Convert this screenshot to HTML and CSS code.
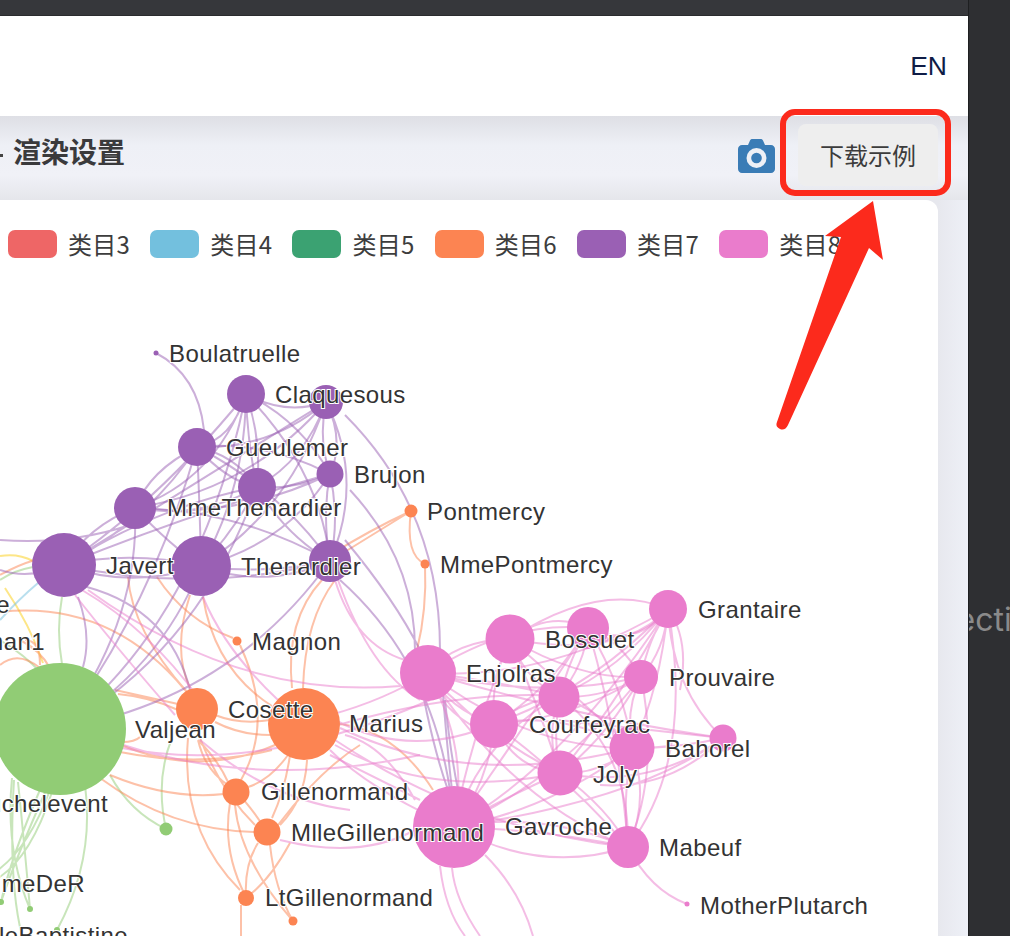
FILE: index.html
```html
<!DOCTYPE html>
<html lang="zh-CN">
<head>
<meta charset="utf-8">
<title>渲染设置</title>
<link rel="stylesheet" href="styles.css">
</head>
<body>
<div class="window">
  <div class="tabstrip"></div>
  <header class="topnav"><span class="lang">EN</span></header>
  <div class="toolbar">
    <span class="toolbar-mark"></span>
    <h2 class="toolbar-title">渲染设置</h2>
    <svg class="camera" viewBox="0 0 37 34" aria-hidden="true">
      <path class="camera-body" d="M4 6h6l2-4.500C12.600 .4 13.500 0 14.500 0h8c1 0 1.900 .4 2.500 1.500L27 6h6c2.200 0 4 1.800 4 4v20c0 2.200-1.800 4-4 4H4c-2.200 0-4-1.800-4-4V10c0-2.200 1.800-4 4-4z"/>
      <circle class="camera-ring" cx="18.500" cy="19" r="10"/>
      <circle class="camera-body" cx="18.500" cy="19" r="5.300"/>
    </svg>
    <button class="download" type="button">下载示例</button>
  </div>
  <main class="card">
    <ul class="legend">
      <li class="legend-item"><i class="swatch c-red"></i>类目3</li>
      <li class="legend-item"><i class="swatch c-blue"></i>类目4</li>
      <li class="legend-item"><i class="swatch c-teal"></i>类目5</li>
      <li class="legend-item"><i class="swatch c-orange"></i>类目6</li>
      <li class="legend-item"><i class="swatch c-purple"></i>类目7</li>
      <li class="legend-item"><i class="swatch c-pink"></i>类目8</li>
    </ul>
    <svg class="graph" viewBox="0 258 938 678" aria-label="graph">
      <g class="edges e-yellow">
        <path d="M0 556Q18 553 33 561M5 588Q30 625 43 663"/>
      </g>
      <g class="edges e-blue">
        <path d="M38 583Q18 600 0 620"/>
      </g>
      <g class="edges e-green">
        <path d="M62 597Q56 630 62 664M0 640Q25 655 40 672M33 567Q15 570 0 580"/>
        <path d="M110 775Q130 812 166 829M172 738Q155 780 166 829"/>
        <path d="M42 785Q10 860 1 902M47 788Q15 860 1 902M12 778Q5 850 30 909M18 782Q25 850 30 909M85 785Q95 860 57 930M52 792Q30 860 -5 880M50 790Q28 850 -5 872M14 780Q8 880 22 936"/>
      </g>
      <g class="edges e-orange">
        <path d="M0 612Q110 600 185 690M128 577Q132 630 187 692M157 577Q185 620 233 638M240 645Q275 720 241 780"/>
        <path d="M190 595Q172 650 190 688M203 597Q215 670 272 706M115 690L178 704M118 694Q150 697 178 710"/>
        <path d="M121 745Q200 778 275 745M120 752Q200 768 272 750M110 775Q170 800 224 794M100 778Q170 830 254 832M122 742Q135 742 140 737"/>
        <path d="M215 715Q240 725 270 720M215 722Q240 735 270 735M198 740Q205 770 228 785M198 740Q218 760 228 782M200 738Q220 790 255 825M188 738Q180 830 240 890"/>
        <path d="M288 755Q270 780 248 787M307 760Q305 800 280 825M290 755Q285 790 272 818M278 825Q320 770 360 745"/>
        <path d="M292 688Q285 620 322 580M303 688Q305 620 335 580M330 561L411 511M330 555Q370 530 411 511M411 511Q405 555 425 564M425 564Q427 610 417 650"/>
        <path d="M236 792Q250 805 267 832M230 803Q222 850 245 895M235 805Q240 860 293 921M258 843Q244 865 246 898M290 843Q270 880 247 897M270 845Q275 890 293 921M241 905L241 936"/>
        <path d="M340 724Q395 730 433 790M0 665Q18 650 40 668M20 640Q40 650 50 668M25 640Q40 640 40 665M0 575Q18 565 35 560"/>
      </g>
      <g class="edges e-purple">
        <path d="M156 353Q198 375 204 430M246 394Q285 416 326 402M246 394Q232 440 197 447M246 394Q247 440 257 487M246 394Q262 440 257 487M246 394Q300 420 330 474M246 394Q215 480 135 508M246 394Q245 490 201 566M246 394Q320 470 330 561"/>
        <path d="M326 402Q270 450 197 447M326 402Q305 460 257 487M326 402Q345 440 330 474M326 402Q250 490 135 508M326 402Q290 510 201 566M326 402Q365 480 330 561M326 402Q318 440 330 474"/>
        <path d="M197 447Q225 480 257 487M197 447Q235 455 257 487M197 447Q265 440 330 474M197 447Q150 470 135 508M197 447Q200 510 201 566M197 447Q280 490 330 561"/>
        <path d="M257 487Q295 490 330 474M257 487Q200 520 135 508M257 487Q235 530 201 566M257 487Q285 535 330 561M330 474Q235 520 135 508M330 474Q285 545 201 566M330 474Q340 520 330 561M330 474Q322 515 330 561"/>
        <path d="M135 508Q170 545 201 566M135 508Q240 510 330 561M201 566Q265 590 330 561M201 566Q265 575 330 561"/>
        <path d="M64 565Q150 520 197 447M64 565Q90 525 135 508M64 565Q160 505 257 487M64 565Q200 510 330 474M64 565Q130 590 201 566M64 565Q130 550 201 566M64 565Q200 595 330 561M64 565Q160 500 246 394M64 565Q200 480 326 402M0 570Q30 580 64 565M0 540Q70 545 130 525"/>
        <path d="M78 597Q92 635 83 667M87 587Q170 610 190 690M60 729Q160 670 201 566M60 729Q140 620 135 508M60 729Q150 610 197 447M60 729Q200 620 246 394M60 729Q200 650 257 487M60 729Q230 700 330 561"/>
        <path d="M340 580Q430 660 450 790M345 415Q440 510 440 650Q445 730 452 790M350 490Q415 560 415 650Q430 740 448 790M345 540Q395 600 420 650M445 700Q450 750 458 790"/>
      </g>
      <g class="edges e-pink">
        <path d="M75 595Q110 640 175 715M88 590Q240 700 400 686M82 590Q150 630 200 700M203 597Q225 650 278 700M335 580Q355 645 405 660M338 580Q370 670 420 700"/>
        <path d="M122 748Q260 775 430 700M120 744Q260 790 420 755M200 740Q270 800 350 810M280 840Q360 860 415 830M330 755Q380 780 420 800M345 735Q385 745 415 800"/>
        <path d="M330 715Q385 700 428 673M335 720Q410 760 494 724M338 725Q460 690 559 696M330 750Q370 790 454 827M335 745Q430 800 560 773M335 740Q470 830 628 847M340 728Q470 790 632 748"/>
        <path d="M428 673Q455 640 510 639M428 673Q510 620 588 628M428 673Q550 680 668 609M428 673Q540 700 641 677M428 673Q490 680 559 696M428 673Q450 710 494 724M428 673Q530 750 632 748M428 673Q490 740 560 773M428 673Q470 750 454 827M428 673Q510 800 628 847M428 673Q590 720 723 738M428 673Q440 710 480 730"/>
        <path d="M510 639Q550 610 588 628M510 639Q600 580 668 609M510 639Q580 680 641 677M510 639Q525 680 559 696M510 639Q490 680 494 724M510 639Q580 700 632 748M510 639Q540 710 560 773M510 639Q470 740 454 827M510 639Q620 660 668 609"/>
        <path d="M588 628Q635 650 668 609M588 628Q620 640 641 677M588 628Q585 665 559 696M588 628Q550 690 494 724M588 628Q625 690 632 748M588 628Q545 700 560 773M588 628Q530 720 454 827M588 628Q620 740 628 847"/>
        <path d="M668 609Q665 650 641 677M668 609Q648 640 641 677M668 609Q620 670 559 696M668 609Q590 690 494 724M668 609Q660 690 632 748M668 609Q672 690 723 738M668 609Q620 700 560 773M668 609Q570 760 454 827M668 609Q695 760 628 847M668 609Q690 640 680 690"/>
        <path d="M641 677Q600 700 559 696M641 677Q570 720 494 724M641 677Q625 710 632 748M641 677Q605 740 560 773M641 677Q560 780 454 827M641 677Q660 770 628 847M559 696Q525 700 494 724M559 696Q600 710 632 748M559 696Q545 740 560 773M559 696Q480 740 454 827M559 696Q630 750 628 847"/>
        <path d="M494 724Q560 710 632 748M494 724Q515 770 560 773M494 724Q490 780 454 827M494 724Q570 780 628 847M632 748Q600 775 560 773M632 748Q550 810 454 827M632 748Q650 800 628 847M632 748Q622 800 628 847M723 738Q650 730 559 720M723 738Q640 800 454 827M723 738Q650 790 560 773M723 738Q670 790 600 785M723 738Q680 748 632 748M560 773Q610 810 628 847M560 773Q500 800 454 827"/>
        <path d="M454 827Q540 875 628 847M454 827Q550 830 628 847M454 827Q540 810 628 847M628 847Q650 890 687 904M440 866Q445 910 465 936M452 868Q455 900 480 936M485 855Q520 890 533 936"/>
      </g>
      <g class="nodes n-purple">
        <circle cx="156" cy="353" r="2.500"/><circle cx="246" cy="394" r="19"/><circle cx="326" cy="402" r="17"/><circle cx="197" cy="447" r="19"/><circle cx="257" cy="487" r="19"/><circle cx="330" cy="474" r="13.500"/><circle cx="135" cy="508" r="21"/><circle cx="64" cy="565" r="32"/><circle cx="201" cy="566" r="30"/><circle cx="330" cy="561" r="21"/>
      </g>
      <g class="nodes n-orange">
        <circle cx="411" cy="511" r="6.500"/><circle cx="425" cy="564" r="4.500"/><circle cx="237" cy="641" r="4.500"/><circle cx="197" cy="709" r="21"/><circle cx="304" cy="724" r="36"/><circle cx="236" cy="792" r="13.500"/><circle cx="267" cy="832" r="13.500"/><circle cx="246" cy="898" r="8"/><circle cx="293" cy="921" r="4.500"/>
      </g>
      <g class="nodes n-green">
        <circle cx="60" cy="729" r="66"/><circle cx="166" cy="829" r="6.500"/><circle cx="1" cy="902" r="3"/><circle cx="30" cy="909" r="3"/><circle cx="57" cy="930" r="3"/>
      </g>
      <g class="nodes n-pink">
        <circle cx="428" cy="673" r="28"/><circle cx="510" cy="639" r="24.500"/><circle cx="588" cy="628" r="21"/><circle cx="668" cy="609" r="19"/><circle cx="641" cy="677" r="17"/><circle cx="559" cy="697" r="20.500"/><circle cx="494" cy="724" r="24"/><circle cx="632" cy="748" r="22.500"/><circle cx="723" cy="738" r="13.500"/><circle cx="560" cy="773" r="22.500"/><circle cx="454" cy="827" r="41"/><circle cx="628" cy="847" r="21"/><circle cx="687" cy="904" r="2.500"/>
      </g>
      <g class="labels">
        <text x="169" y="362">Boulatruelle</text>
        <text x="275" y="403">Claquesous</text>
        <text x="226" y="456">Gueulemer</text>
        <text x="354" y="483">Brujon</text>
        <text x="167" y="516">MmeThenardier</text>
        <text x="427" y="520">Pontmercy</text>
        <text x="440" y="573">MmePontmercy</text>
        <text x="106" y="574">Javert</text>
        <text x="241" y="575">Thenardier</text>
        <text x="252" y="650">Magnon</text>
        <text x="135" y="738">Valjean</text>
        <text x="228" y="718">Cosette</text>
        <text x="349" y="732">Marius</text>
        <text x="261" y="800">Gillenormand</text>
        <text x="291" y="841">MlleGillenormand</text>
        <text x="265" y="906">LtGillenormand</text>
        <text x="466" y="682">Enjolras</text>
        <text x="545" y="648">Bossuet</text>
        <text x="698" y="618">Grantaire</text>
        <text x="669" y="686">Prouvaire</text>
        <text x="529" y="733">Courfeyrac</text>
        <text x="665" y="757">Bahorel</text>
        <text x="593" y="783">Joly</text>
        <text x="505" y="835">Gavroche</text>
        <text x="659" y="856">Mabeuf</text>
        <text x="700" y="914">MotherPlutarch</text>
        <text class="end" x="108" y="812">Fauchelevent</text>
        <text class="end" x="85" y="892">MmeDeR</text>
        <text class="end" x="128" y="944">MlleBaptistine</text>
        <text class="end" x="45" y="650">Woman1</text>
        <text class="end" x="10" y="613">Fantine</text>
      </g>
    </svg>
  </main>
</div>
<aside class="side"><span class="side-text">Section</span></aside>
<svg class="annotation" viewBox="0 0 1010 936" aria-hidden="true">
  <rect class="callout" x="783" y="112" width="165" height="81" rx="12"/>
  <path class="arrow" d="M873 201L883 260L869 248L788 425Q785 431 780 429Q775 427 777 422L841 237L825 236Z"/>
</svg>
</body>
</html>
```
FILE: styles.css
```css
* {
  box-sizing: border-box;
}

html,
body {
  margin: 0;
  height: 936px;
  overflow: hidden;
}

body {
  position: relative;
  display: flex;
  background: #2e2f32;
  font-family: "Noto Sans CJK SC", "Liberation Sans", sans-serif;
}

.window {
  width: 968px;
  height: 936px;
  display: flex;
  flex-direction: column;
  background: linear-gradient(90deg, #e7e8ee 938px, #eef0f7 968px);
  flex: none;
}

.tabstrip {
  height: 16px;
  background: #36373b;
  border-bottom: 1px solid #2a2b2e;
  flex: none;
}

.topnav {
  height: 100px;
  flex: none;
  display: flex;
  align-items: center;
  justify-content: flex-end;
  padding: 0 21px 0 0;
  background: #fff;
}

.lang {
  font-family: "Liberation Sans", sans-serif;
  font-size: 26.5px;
  color: #0f1c46;
}

.toolbar {
  height: 84px;
  flex: none;
  display: flex;
  align-items: center;
  padding: 0 30px 0 0;
  background: linear-gradient(180deg, #dedfe5 0%, #eef0f6 35%, #f0f1f7 70%, #e5e6eb 100%);
}

.toolbar-mark {
  width: 3px;
  height: 3px;
  margin-top: -6px;
  margin-right: 10px;
  background: #444;
  flex: none;
}

.toolbar-title {
  margin: -14px 0 0;
  font-size: 28px;
  line-height: 1;
  font-weight: 700;
  color: #3a3a3c;
}

.camera {
  width: 37px;
  height: 34px;
  margin: -4px 23px 0 auto;
  flex: none;
}

.camera-body {
  fill: #3a7cb6;
}

.camera-ring {
  fill: #eef0f6;
}

.download {
  width: 140px;
  height: 62px;
  margin-top: -7px;
  border: 0;
  border-radius: 8px;
  padding: 0;
  background: #eeeeee;
  color: #3c3c3c;
  font: 400 24px "Noto Sans CJK SC", sans-serif;
}

.card {
  width: 938px;
  flex: 1;
  min-height: 0;
  background: #fff;
  border-radius: 0 12px 0 0;
  overflow: hidden;
}

.legend {
  list-style: none;
  margin: 0;
  padding: 30px 0 0 8px;
  height: 58px;
  display: flex;
  gap: 20px;
}

.legend-item {
  display: flex;
  align-items: center;
  gap: 11px;
  height: 28px;
  font-size: 24px;
  letter-spacing: .3px;
  line-height: 28px;
  color: #3d3d3d;
  white-space: nowrap;
}

.swatch {
  display: block;
  width: 49px;
  height: 28px;
  border-radius: 7px;
  flex: none;
}

.c-red { background: #ee6666; }
.c-blue { background: #73c0de; }
.c-teal { background: #3ba272; }
.c-orange { background: #fc8452; }
.c-purple { background: #9a60b4; }
.c-pink { background: #ea7ccc; }

.graph {
  display: block;
  width: 938px;
  height: 678px;
  overflow: hidden;
}

.edges {
  fill: none;
  stroke-width: 2;
  stroke-opacity: .5;
}

.e-yellow { stroke: #fcce10; }
.e-blue { stroke: #73c0de; }
.e-green { stroke: #91cc75; }
.e-orange { stroke: #fc8452; }
.e-purple { stroke: #9a60b4; }
.e-pink { stroke: #ea7ccc; }

.n-green { fill: #91cc75; }
.n-orange { fill: #fc8452; }
.n-purple { fill: #9a60b4; }
.n-pink { fill: #ea7ccc; }

.labels text {
  font-family: "Liberation Sans", sans-serif;
  font-size: 24px;
  letter-spacing: .4px;
  fill: #333;
  stroke: #fff;
  stroke-width: 2px;
  paint-order: stroke;
}

.labels .end {
  text-anchor: end;
}

.side {
  flex: 1;
  min-width: 0;
  overflow: hidden;
  border-left: 1px solid #1e1f21;
  padding-top: 600px;
  white-space: nowrap;
}

.side-text {
  display: block;
  margin-left: -33px;
  font-family: "Inter", sans-serif;
  font-size: 32px;
  line-height: 40px;
  color: #8a8a8a;
}

.annotation {
  position: absolute;
  left: 0;
  top: 0;
  width: 1010px;
  height: 936px;
  pointer-events: none;
}

.callout {
  fill: none;
  stroke: #fc2a1c;
  stroke-width: 6;
}

.arrow {
  fill: #fc2a1c;
}
```
